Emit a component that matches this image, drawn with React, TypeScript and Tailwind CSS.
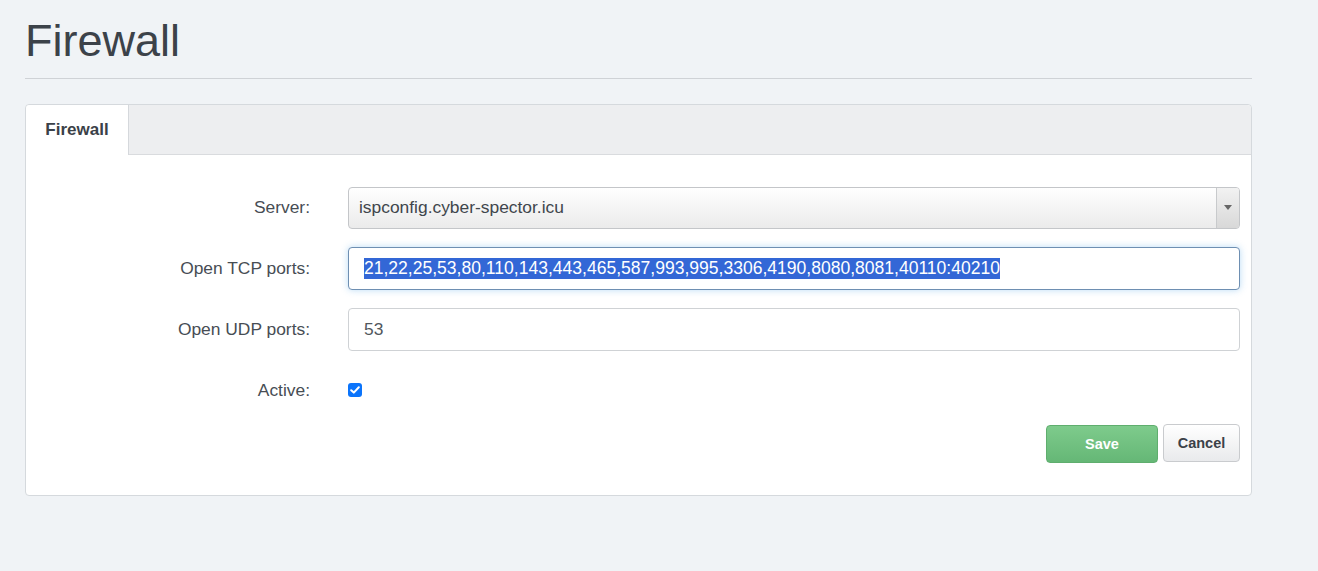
import React from "react";

export default function App() {
  const font = { fontFamily: '"Liberation Sans", Arial, sans-serif' };
  return (
    <div
      className="min-h-[571px] w-full bg-[#f0f3f6] pl-[25px]"
      style={font}
    >
      <div className="w-[1227px]">
        <h1 className="pt-[16px] pb-[12px] text-[45px] leading-[50px] font-normal text-[#3c4249]">
          Firewall
        </h1>
        <div className="h-px bg-[#cfd2d6]" />
        <div className="mt-[25px] rounded-[4px] border border-[#d5d9dd] bg-white">
          <div className="flex h-[50px] rounded-t-[4px] border-b border-[#d9dbde] bg-[#edeef0]">
            <div className="-mb-px flex h-[50px] w-[103px] items-center justify-center rounded-tl-[4px] border-r border-[#d5d8dc] bg-white text-[17px] font-bold text-[#3b4148]">
              Firewall
            </div>
          </div>
          <div className="pt-[31px] pr-[11px] pb-[32px]">
            <div className="flex flex-col gap-[18px]">
              <div className="flex h-[43px] items-center">
                <div className="w-[284px] text-right text-[17.4px] text-[#474d54]">
                  Server:
                </div>
                <div className="ml-[38px] flex h-[42px] flex-1 overflow-hidden rounded-[4px] border border-[#c4c6c9] bg-gradient-to-b from-white to-[#ebebeb]">
                  <div className="flex flex-1 items-center pl-[10px] text-[17.4px] text-[#40464c]">
                    ispconfig.cyber-spector.icu
                  </div>
                  <div className="flex w-[23px] items-center justify-center border-l border-[#c8cacc] bg-gradient-to-b from-[#f2f2f2] to-[#d8d8d8]">
                    <svg width="8" height="5" viewBox="0 0 8 5">
                      <path d="M0 0 L8 0 L4 5 Z" fill="#666" />
                    </svg>
                  </div>
                </div>
              </div>
              <div className="flex h-[43px] items-center">
                <div className="w-[284px] text-right text-[17.4px] text-[#474d54]">
                  Open TCP ports:
                </div>
                <div className="ml-[38px] flex h-[43px] flex-1 items-center rounded-[4px] border border-[#6e8fb2] bg-white pl-[15px] shadow-[0_0_7px_rgba(102,175,233,0.45)]">
                  <span className="bg-[#3367d6] text-[17.55px] leading-[21px] text-white">
                    21,22,25,53,80,110,143,443,465,587,993,995,3306,4190,8080,8081,40110:40210
                  </span>
                </div>
              </div>
              <div className="flex h-[43px] items-center">
                <div className="w-[284px] text-right text-[17.4px] text-[#474d54]">
                  Open UDP ports:
                </div>
                <div className="ml-[38px] flex h-[43px] flex-1 items-center rounded-[4px] border border-[#cfd2d5] bg-white pl-[15px] text-[17.4px] text-[#51575d]">
                  53
                </div>
              </div>
              <div className="flex h-[43px] items-center">
                <div className="w-[284px] text-right text-[17.4px] text-[#474d54]">
                  Active:
                </div>
                <div className="ml-[38px] -mt-px flex items-center">
                  <div className="flex h-[14px] w-[14px] items-center justify-center rounded-[3px] bg-[#0b74fb]">
                    <svg width="10" height="8" viewBox="0 0 10 8">
                      <path
                        d="M1.2 4.2 L3.8 6.6 L8.8 1.2"
                        fill="none"
                        stroke="white"
                        strokeWidth="2"
                        strokeLinecap="round"
                        strokeLinejoin="round"
                      />
                    </svg>
                  </div>
                </div>
              </div>
            </div>
            <div className="mt-[12px] flex justify-end gap-[5px]">
              <button className="mt-px h-[38px] w-[112px] rounded-[4px] border border-[#5fae6e] bg-gradient-to-b from-[#7ecb8c] to-[#65b776] pt-px text-[14.5px] font-bold text-white">
                Save
              </button>
              <button className="h-[38px] w-[77px] rounded-[4px] border border-[#c9cbce] bg-gradient-to-b from-white to-[#e9eaec] pt-px text-[14.5px] font-bold text-[#3b4148]">
                Cancel
              </button>
            </div>
          </div>
        </div>
      </div>
    </div>
  );
}
